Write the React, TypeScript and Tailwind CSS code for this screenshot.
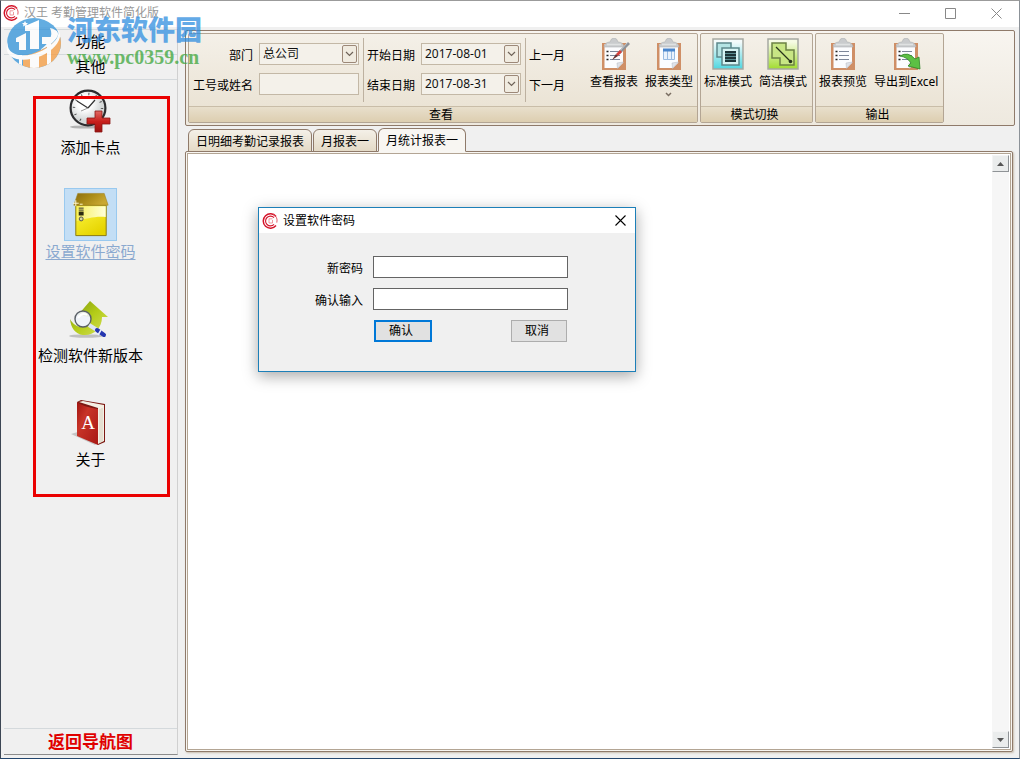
import { useState } from "react";
import type { ReactNode } from "react";

const tabs = ["日明细考勤记录报表", "月报表一", "月统计报表一"];

function Logo({ size }: { size: number }) {
  return (
    <svg width={size} height={size} viewBox="0 0 16 16" fill="none">
      <path d="M14 3.400A7.2 7.2 0 1 0 14 12.600" stroke="#d4142a" strokeWidth="1.5" />
      <path d="M12 4.600A4.900 4.900 0 1 0 12 11.400" stroke="#d4142a" strokeWidth="1.1" />
      <path d="M11 1.400A7.2 7.2 0 0 1 14.800 9.600" stroke="#e04a58" strokeWidth="0.9" />
      <path d="M10.500 5.800H7V10H10.500V7" stroke="#e88088" strokeWidth="0.8" />
    </svg>
  );
}

function ClockIcon() {
  return (
    <svg width="44" height="48" viewBox="0 0 44 48">
      <defs>
        <radialGradient id="face" cx="0.4" cy="0.35">
          <stop offset="0.4" stopColor="#ffffff" />
          <stop offset="1" stopColor="#d5d8d8" />
        </radialGradient>
        <linearGradient id="plus" x2="0" y2="1">
          <stop offset="0" stopColor="#e06a64" />
          <stop offset="0.5" stopColor="#c8201c" />
          <stop offset="1" stopColor="#9c1210" />
        </linearGradient>
      </defs>
      <ellipse cx="18" cy="40" rx="16" ry="1.600" fill="#8a8a8a" opacity="0.6" />
      <circle cx="20" cy="21" r="17.4" fill="url(#face)" stroke="#2c2c2e" strokeWidth="2.2" />
      <circle cx="20" cy="21" r="14" fill="none" stroke="#4c4c4c" strokeWidth="2.4" strokeDasharray="1 6.33" />
      <path d="M20 21L9 14M20 21L27 13" stroke="#333" strokeWidth="1.2" />
      <path d="M20 21L13 24" stroke="#999" strokeWidth="1" />
      <path d="M27 24h7v7h8v6h-8v8h-7v-8h-8v-6h8z" fill="url(#plus)" stroke="#8c1614" strokeWidth="0.8" />
    </svg>
  );
}

function BoxIcon() {
  return (
    <svg width="52" height="52" viewBox="0 0 52 52">
      <defs>
        <linearGradient id="lid" x2="1" y2="0.4">
          <stop offset="0" stopColor="#8a6c10" />
          <stop offset="0.5" stopColor="#a88a18" />
          <stop offset="1" stopColor="#c9a832" />
        </linearGradient>
        <linearGradient id="boxBody" x2="0.6" y2="1">
          <stop offset="0" stopColor="#f6ee30" />
          <stop offset="0.5" stopColor="#f2e622" />
          <stop offset="1" stopColor="#e6d400" />
        </linearGradient>
        <linearGradient id="boxShine">
          <stop offset="0" stopColor="#f8f060" />
          <stop offset="1" stopColor="#ffffd8" />
        </linearGradient>
      </defs>
      <path d="M11 16H42V47H11z" fill="url(#boxBody)" stroke="#8a7a10" strokeWidth="1" />
      <path d="M12 17H41.500V28C30 27 22 30 12 32z" fill="url(#boxShine)" />
      <path d="M13 4H40L44 16H9z" fill="url(#lid)" stroke="#a08220" strokeWidth="0.6" />
      <path d="M14 19h5M14 21h5" stroke="#333" strokeWidth="1" />
      <path d="M14 22.500h5v4h-5z" fill="#2c2a10" />
      <circle cx="16.500" cy="30" r="2" fill="#d6d6a0" stroke="#444" strokeWidth="0.9" />
      <path d="M11 11v6M8 14h6M15 15h3" stroke="#fff8d0" strokeWidth="1" />
    </svg>
  );
}

function UpdateIcon() {
  return (
    <svg width="44" height="42" viewBox="0 0 44 42">
      <defs>
        <linearGradient id="arrow" x2="1" y2="1">
          <stop offset="0" stopColor="#7c9410" />
          <stop offset="0.5" stopColor="#b4cc18" />
          <stop offset="1" stopColor="#d6e060" />
        </linearGradient>
      </defs>
      <ellipse cx="18" cy="38" rx="17" ry="1.800" fill="#a0a0a0" opacity="0.6" />
      <path d="M22 3L40 19H34C34 31 25 38 15 37C7 36 3 30 2 21C7 30 16 31 20 26C22 23 22 21 22 19L10 17z" fill="url(#arrow)" />
      <circle cx="15" cy="21" r="8" fill="#eef3fa" fillOpacity="0.9" stroke="#5a6066" strokeWidth="1.4" />
      <path d="M10 20q4-6 9-3" stroke="#fff" strokeWidth="2" fill="none" />
      <path d="M21 27L29 32" stroke="#dde4f4" strokeWidth="4" />
      <path d="M29 32L36 37" stroke="#2536b0" strokeWidth="4" strokeLinecap="round" />
      <path d="M33 32l-3 5" stroke="#e8eefc" strokeWidth="1.500" />
    </svg>
  );
}

function BookIcon() {
  return (
    <svg width="40" height="48" viewBox="0 0 40 48">
      <defs>
        <linearGradient id="cover" x2="1" y2="1">
          <stop offset="0" stopColor="#a01410" />
          <stop offset="0.35" stopColor="#c83428" />
          <stop offset="1" stopColor="#a81814" />
        </linearGradient>
      </defs>
      <path d="M0 35L10 32L28 44L24 46z" fill="#888" opacity="0.4" />
      <path d="M6 3L10 1L34 5V43L27 46z" fill="#7c1812" />
      <path d="M8 3L12 2L33 6V42L27 45V9z" fill="#f4f0e4" />
      <path d="M29 10V44M31 9V43" stroke="#c8c0b0" strokeWidth="0.700" />
      <path d="M6 3Q12 8 27 10V46L6 37z" fill="url(#cover)" />
      <text x="17" y="30" textAnchor="middle" fontSize="19" fill="#fff" fontFamily="Liberation Serif, serif">A</text>
    </svg>
  );
}

function Clipboard({ children }: { children?: ReactNode }) {
  return (
    <svg width="32" height="32" viewBox="0 0 32 32">
      <path d="M4 5H28V32H4z" fill="#cf8f66" />
      <path d="M6.500 6H25V25L20 30H6.500z" fill="#fbfcfe" />
      <path d="M25.500 24L19.500 30.500L19 25z" fill="#dfe2e8" stroke="#b4b8c0" strokeWidth="0.5" />
      <path d="M6 9Q7 4 12 4Q13 0 16 0Q19 0 20 4Q25 4 26 9H6z" fill="#c9cbcd" stroke="#b0b3b6" strokeWidth="0.6" />
      <path d="M9 6.500H23" stroke="#dfe1e2" strokeWidth="1.500" />
      {children}
    </svg>
  );
}

function Lines() {
  return (
    <>
      <path d="M12 13.500H22M12 17.500H22M12 21.500H22" stroke="#7c8698" strokeWidth="1" />
      <path d="M8.500 13.500H10.500M8.500 17.500H10.500M8.500 21.500H10.500" stroke="#222" strokeWidth="1.500" />
    </>
  );
}

function ModeIcon({ green }: { green?: boolean }) {
  return (
    <svg width="32" height="32" viewBox="0 0 32 32">
      <defs>
        <linearGradient id="cyan" x2="0" y2="1">
          <stop offset="0.1" stopColor="#f4fbfb" />
          <stop offset="1" stopColor="#4fd6e0" />
        </linearGradient>
        <linearGradient id="lime" x2="0" y2="1">
          <stop offset="0.1" stopColor="#f6fbe4" />
          <stop offset="1" stopColor="#a2dc30" />
        </linearGradient>
      </defs>
      <rect x="1" y="1" width="30" height="30" fill={green ? "url(#lime)" : "url(#cyan)"} stroke="#a6a9a2" strokeWidth="1.500" />
      {green ? (
        <>
          <path d="M5 5H19V12H27V27H13V20H5z" fill="#c8e684" stroke="#6c8244" strokeWidth="1.500" />
          <path d="M9 9L23 23" stroke="#26331a" strokeWidth="1.200" />
          <circle cx="23.500" cy="23.500" r="1.800" fill="#26331a" />
        </>
      ) : (
        <>
          <path d="M5 5H19V19H5z" fill="#b4e4e4" stroke="#5c888c" strokeWidth="1.500" />
          <path d="M10 10H27V27H10z" fill="#d6f4f4" stroke="#5c888c" strokeWidth="1.500" />
          <path d="M13 13H24V24H13z" fill="#1c3438" />
          <path d="M13 15.500H24M13 18.500H24M13 21.500H24" stroke="#6ca4a8" strokeWidth="0.8" />
        </>
      )}
    </svg>
  );
}

function SelectBox({ id, value }: { id: string; value: string }) {
  return (
    <div className="relative">
      <select
        id={id}
        className="block h-[22px] w-[100px] appearance-none border border-[#c3b8a6] bg-[#f4f1ea] pl-[3px] text-xs text-[#111] outline-none"
      >
        <option>{value}</option>
      </select>
      <span className="pointer-events-none absolute top-0.5 right-0.5 flex h-[18px] w-[15px] items-center justify-center rounded-xs border border-[#9c8878] bg-[#f0ebe0]">
        <svg width="9" height="6" viewBox="0 0 9 6" fill="none" stroke="#6e6258" strokeWidth="1.2">
          <path d="M1 1L4.500 4.500L8 1" />
        </svg>
      </span>
    </div>
  );
}

function Group({ title, className, children }: { title: string; className?: string; children: ReactNode }) {
  return (
    <section className={`flex h-[90px] flex-col rounded-xs border border-[#b3a594] bg-linear-to-b from-[#f4f0e8] to-[#e9e1d1] ${className}`}>
      <div className="flex min-h-0 flex-1 pt-1 pr-1 pl-0.5">{children}</div>
      <h2 className="h-4 border-t border-[#c9bda8] bg-linear-to-b from-[#e8dfcc] to-[#ddceb0] pr-1 text-center text-xs leading-[15px]">{title}</h2>
    </section>
  );
}

function RibbonButton({ label, icon, drop }: { label: string; icon: ReactNode; drop?: boolean }) {
  return (
    <button className="flex flex-col items-center self-start text-xs leading-6 whitespace-nowrap">
      {icon}
      {label}
      {drop && (
        <svg className="-mt-0.5" width="7" height="5" viewBox="0 0 7 5" fill="none" stroke="#7a6e62" strokeWidth="1.500">
          <path d="M1 1L3.500 3.500L6 1" />
        </svg>
      )}
    </button>
  );
}

function SideItem({ label, icon, active }: { label: string; icon: ReactNode; active?: boolean }) {
  return (
    <button className="flex flex-col items-center">
      <span className={`flex size-[53px] items-center justify-center border ${active ? "border-[#99c9ef] bg-[#c3def5]" : "border-transparent"}`}>
        {icon}
      </span>
      <span className={`text-[15px] leading-[21px] ${active ? "text-[#8ba9cf] underline underline-offset-2" : ""}`}>{label}</span>
    </button>
  );
}

function ScrollButton({ down }: { down?: boolean }) {
  return (
    <button aria-label={down ? "向下" : "向上"} className="flex h-[17px] items-center justify-center border border-[#f4f4f4] border-r-[#8f9396] border-b-[#8f9396] bg-[#eaecec]">
      <svg width="7" height="4" viewBox="0 0 7 4" fill="#555">
        <path d={down ? "M0 0H7L3.500 4z" : "M0 4H7L3.500 0z"} />
      </svg>
    </button>
  );
}

function Watermark() {
  return (
    <div className="pointer-events-none absolute top-3 left-1 flex items-center gap-1 opacity-75">
      <svg width="58" height="56" viewBox="0 0 58 56">
        <defs>
          <clipPath id="globe">
            <ellipse cx="29" cy="30" rx="27" ry="25" />
          </clipPath>
        </defs>
        <g clipPath="url(#globe)">
          <path d="M0 0H58V56H0z" fill="#2f92d8" />
          <path d="M34 38Q48 32 58 20V56H18V43Q26 42 34 38z" fill="#f59a3c" />
          <path d="M20 13L34 7V36H25V18H20z" fill="#fff" />
          <path d="M11 25L21 20V37H14V29H11z" fill="#fff" />
          <path d="M25 42H34V56H25z" fill="#fff" />
          <path d="M14 42H17V54H14z" fill="#fff" />
          <path d="M37 24H46V56H42V31H37z" fill="#fff" />
        </g>
        <path d="M3 28C0 42 18 46 34 39C48 33 57 22 52 16C60 22 52 36 36 43C16 51 -4 46 3 28z" fill="#fff" />
        <path d="M45 15Q58 18 50 27Q44 34 35 37Q50 26 45 15z" fill="#fff" />
        <path d="M20 8l1 2l2 0l-1.500 1.500l0.500 2l-2-1l-2 1l0.500-2l-1.500-1.500l2 0z" fill="#fff" />
      </svg>
      <div className="flex flex-col">
        <span className="font-['Noto_Sans_CJK_SC',sans-serif] text-[27px] leading-8 font-black text-[#2f8ee0]">河东软件园</span>
        <span className="font-['Liberation_Serif',serif] text-xl leading-6 font-bold text-[#3ea63c]">www.pc0359.cn</span>
      </div>
    </div>
  );
}

function PasswordDialog({ onClose }: { onClose: () => void }) {
  return (
    <div role="dialog" aria-label="设置软件密码" className="absolute top-[206px] left-[257px] h-[165px] w-[378px] border border-[#1c7fb8] bg-[#f0f0f0] shadow-[0_4px_14px_rgba(0,0,0,0.35)]">
      <div className="flex h-[25px] items-center bg-white pr-1.5 pl-[3px] text-xs">
        <Logo size={16} />
        <span className="ml-[5px] flex-1">设置软件密码</span>
        <button aria-label="关闭" onClick={onClose} className="p-[3px]">
          <svg width="11" height="11" viewBox="0 0 11 11" stroke="#000" strokeWidth="1.1">
            <path d="M0.500 0.500L10.500 10.500M10.500 0.500L0.500 10.500" />
          </svg>
        </button>
      </div>
      <form className="mt-[23px] flex flex-col gap-2.5 text-xs" onSubmit={(e) => e.preventDefault()}>
        <div className="flex items-center">
          <label htmlFor="pwd" className="w-[104px] pt-1 text-right">新密码</label>
          <input id="pwd" type="password" className="ml-2.5 h-[22px] w-[195px] border border-[#646464] bg-white px-1 outline-none" />
        </div>
        <div className="flex items-center">
          <label htmlFor="pwd2" className="w-[104px] pt-1 text-right">确认输入</label>
          <input id="pwd2" type="password" className="ml-2.5 h-[22px] w-[195px] border border-[#646464] bg-white px-1 outline-none" />
        </div>
        <div className="ml-[115px] flex w-[193px] justify-between">
          <button className="h-[22px] w-[58px] border-2 border-[#0078d7] bg-[#e1e1e1] pr-1 leading-[18px]">确认</button>
          <button type="button" onClick={onClose} className="h-[22px] w-14 border border-[#adadad] bg-[#e1e1e1] pr-1">取消</button>
        </div>
      </form>
    </div>
  );
}

export default function App() {
  const [tab, setTab] = useState(2);
  const [open, setOpen] = useState(true);

  return (
    <div className="relative flex h-screen flex-col overflow-hidden border border-t-[#9b9b9b] border-r-[#8c9298] border-b-[#23466e] border-l-[#3c4654] bg-[#f0f0f0] font-['Noto_Sans','Noto_Sans_CJK_SC',sans-serif] text-black">
      {/* TITLE BAR */}
      <header className="flex h-[26px] shrink-0 items-center bg-white pr-[17px] pb-0.5 pl-0.5">
        <Logo size={16} />
        <h1 className="ml-[5px] flex-1 text-xs text-[#999]">汉王 考勤管理软件简化版</h1>
        <div className="flex gap-[35px] text-[#888]">
          <button aria-label="最小化">
            <svg width="11" height="11" viewBox="0 0 11 11" stroke="currentColor"><path d="M0 5.500H11" /></svg>
          </button>
          <button aria-label="最大化">
            <svg width="11" height="11" viewBox="0 0 11 11" fill="none" stroke="currentColor"><path d="M0.500 0.500H10.500V10.500H0.500z" /></svg>
          </button>
          <button aria-label="关闭">
            <svg width="11" height="11" viewBox="0 0 11 11" stroke="currentColor"><path d="M0.500 0.500L10.500 10.500M10.500 0.500L0.500 10.500" /></svg>
          </button>
        </div>
      </header>

      <div className="flex min-h-0 flex-1">
        {/* SIDEBAR */}
        <aside className="mt-0.5 mb-[3px] ml-[3px] flex w-[174px] shrink-0 flex-col border-r border-b border-r-[#d0d0d0] border-b-[#8c8c8c] text-[15px]">
          <button className="h-[25px] border-t border-[#d4d9dc] pb-[3px] leading-5">功能</button>
          <button className="h-[26px] border-y border-[#d4d9dc] pb-[3px] leading-5">其他</button>
          <nav className="flex flex-1 flex-col items-center gap-[30px] pt-1">
            <SideItem label="添加卡点" icon={<ClockIcon />} />
            <SideItem label="设置软件密码" icon={<BoxIcon />} active />
            <SideItem label="检测软件新版本" icon={<UpdateIcon />} />
            <SideItem label="关于" icon={<BookIcon />} />
          </nav>
          <button className="h-[26px] border-t border-[#d4d9dc] text-[17px] leading-6 font-bold text-[#e00000]">返回导航图</button>
        </aside>

        <main className="mt-[3px] mr-1 mb-1.5 ml-[7px] flex min-w-0 flex-1 flex-col">
          {/* RIBBON */}
          <div className="flex h-24 shrink-0 gap-0.5 rounded-xs border border-[#8f7a6a] bg-linear-to-b from-[#f8f5f0] to-[#eee9df] p-0.5">
            <Group title="查看" className="w-[510px]">
              <div className="grid auto-rows-[22px] grid-cols-[62px_100px] gap-x-1.5 gap-y-2 pt-[5px] text-xs">
                <label htmlFor="dept" className="self-center pt-1 text-right">部门</label>
                <SelectBox id="dept" value="总公司" />
                <label htmlFor="empno" className="self-center pt-1 text-right whitespace-nowrap">工号或姓名</label>
                <input id="empno" className="h-[22px] min-w-0 border border-[#c3b8a6] bg-[#f4f1ea] px-1 outline-none" />
              </div>
              <div className="mr-[3px] ml-1 h-16 w-px bg-[#bdb1a0]" />
              <div className="grid auto-rows-[22px] grid-cols-[48px_100px] gap-x-1.5 gap-y-2 pt-[5px] text-xs">
                <label htmlFor="from" className="self-center pt-1">开始日期</label>
                <SelectBox id="from" value="2017-08-01" />
                <label htmlFor="to" className="self-center pt-1">结束日期</label>
                <SelectBox id="to" value="2017-08-31" />
              </div>
              <div className="mr-[3px] ml-1 h-16 w-px bg-[#bdb1a0]" />
              <div className="flex flex-col gap-2 pt-[7px] text-xs leading-[22px]">
                <button>上一月</button>
                <button>下一月</button>
              </div>
              <div className="ml-auto flex gap-[7px]">
                <RibbonButton
                  label="查看报表"
                  icon={
                    <Clipboard>
                      <Lines />
                      <path d="M21 15L31 5" stroke="#8d9298" strokeWidth="3" />
                      <path d="M21 14L30 4" stroke="#c4c8cc" strokeWidth="1" />
                      <path d="M18 16L22 12L24 14L20 18z" fill="#d8403c" />
                      <path d="M14 22L18 16L20 18z" fill="#6a3030" />
                    </Clipboard>
                  }
                />
                <RibbonButton
                  label="报表类型"
                  drop
                  icon={
                    <Clipboard>
                      <path d="M10.500 12.500H21.500V21.500H10.500zM14.500 12V22M18.500 12V22" fill="#eaf2fc" stroke="#9abce2" />
                      <path d="M10 10.500H22V13.500H10z" fill="#4a86cc" />
                    </Clipboard>
                  }
                />
              </div>
            </Group>
            <Group title="模式切换" className="w-[113px]">
              <div className="flex gap-[7px] pl-px">
                <RibbonButton label="标准模式" icon={<ModeIcon />} />
                <RibbonButton label="简洁模式" icon={<ModeIcon green />} />
              </div>
            </Group>
            <Group title="输出" className="w-[129px]">
              <div className="flex gap-[7px] pl-px">
                <RibbonButton label="报表预览" icon={<Clipboard><Lines /></Clipboard>} />
                <RibbonButton
                  label="导出到Excel"
                  icon={
                    <Clipboard>
                      <Lines />
                      <path d="M10 18Q18 13 25 21L29 19L30 31L18 28L21 25Q17 19 10 18z" fill="#5cc044" stroke="#2e8424" strokeWidth="0.8" />
                    </Clipboard>
                  }
                />
              </div>
            </Group>
          </div>

          {/* TABS */}
          <div role="tablist" className="relative z-10 mt-0.5 -mb-px flex shrink-0 items-end gap-px pl-[3px]">
            {tabs.map((t, i) => (
              <button
                key={t}
                role="tab"
                aria-selected={tab === i}
                onClick={() => setTab(i)}
                className={`rounded-t-md border border-[#8f7a6a] px-[7px] pt-0.5 text-xs ${
                  tab === i ? "h-6 border-b-[#f8f6f2] bg-[#f8f6f2]" : "h-[23px] bg-linear-to-b from-[#f4f0e8] to-[#e4dac6]"
                }`}
              >
                {t}
              </button>
            ))}
          </div>

          {/* REPORT VIEW */}
          <div className="mr-0.5 flex min-h-0 flex-1 rounded-xs border border-[#8f7a6a] bg-[#f8f6f2] p-px shadow-[1px_1px_2px_#c8beb0]">
            <div className="flex flex-1 justify-end border border-[#b3a594] bg-white p-px">
              <div className="flex w-[17px] flex-col justify-between bg-[#f6f6f6]">
                <ScrollButton />
                <ScrollButton down />
              </div>
            </div>
          </div>
        </main>
      </div>

      {/* HIGHLIGHT FRAME */}
      <div className="pointer-events-none absolute top-[95px] left-8 h-[401px] w-[137px] border-3 border-[#ea0000]" />

      <Watermark />
      {open && <PasswordDialog onClose={() => setOpen(false)} />}
    </div>
  );
}
